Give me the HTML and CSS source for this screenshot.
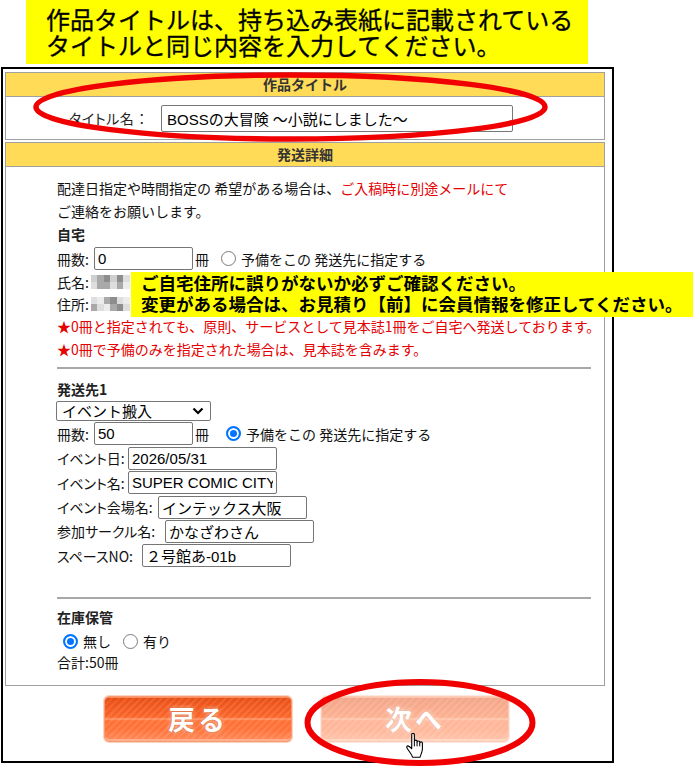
FILE: index.html
```html
<!DOCTYPE html>
<html lang="ja">
<head>
<meta charset="utf-8">
<title>作品情報入力</title>
<link rel="stylesheet" href="styles.css">
</head>
<body>
<div class="page">
  <div class="banner">作品タイトルは、持ち込み表紙に記載されている<br>タイトルと同じ内容を入力してください。</div>

  <div class="frame">
    <div class="section">
      <div class="sec-head">作品タイトル</div>
      <div class="title-body">
        <span class="title-label">タイトル名 ：</span>
        <input class="input input-title" type="text" value="BOSSの大冒険 〜小説にしました〜">
      </div>
    </div>

    <div class="section section-ship">
      <div class="sec-head">発送詳細</div>
      <div class="ship-body">
        <p class="line">配達日指定や時間指定の 希望がある場合は、<span class="red">ご入稿時に別途メールにて</span></p>
        <p class="line">ご連絡をお願いします。</p>
        <p class="line bold">自宅</p>
        <div class="field field-home">
          <span class="lbl lbl-count">冊数:</span>
          <input class="input input-count" type="text" value="0">
          <span class="unit">冊</span>
          <input class="radio radio-spare" type="radio" name="spare">
          <span class="radio-label">予備をこの 発送先に指定する</span>
        </div>
        <p class="line line-person"><span class="lbl">氏名:</span><span class="mosaic"><i class="c1"></i><i class="c2"></i><i class="c3"></i><i class="c1"></i><i class="c3"></i><i class="c4"></i><i class="c4"></i><i class="c2"></i><i class="c2"></i><i class="c4"></i><i class="c2"></i><i class="c5"></i></span></p>
        <p class="line line-person"><span class="lbl">住所:</span><span class="mosaic"><i class="c4"></i><i class="c5"></i><i class="c2"></i><i class="c3"></i><i class="c4"></i><i class="c5"></i><i class="c2"></i><i class="c4"></i><i class="c5"></i><i class="c2"></i><i class="c3"></i><i class="c4"></i></span></p>
        <p class="line red">★0冊と指定されても、原則、サービスとして見本誌1冊をご自宅へ発送しております。</p>
        <p class="line red">★0冊で予備のみを指定された場合は、見本誌を含みます。</p>

        <hr class="rule">

        <p class="line bold heading-dest">発送先1</p>
        <div class="select-wrap">
          <select class="select">
            <option>イベント搬入</option>
          </select>
          <svg class="chevron" width="12" height="8" viewBox="0 0 12 8"><path d="M1.5 1.5 L6 6 L10.5 1.5" fill="none" stroke="#000" stroke-width="2.2"/></svg>
        </div>
        <div class="field">
          <span class="lbl lbl-count">冊数:</span>
          <input class="input input-count" type="text" value="50">
          <span class="unit">冊</span>
          <input class="radio radio-spare2" type="radio" name="spare" checked>
          <span class="radio-label">予備をこの 発送先に指定する</span>
        </div>
        <div class="field">
          <span class="lbl lbl-date">イベント日:</span>
          <input class="input input-wide" type="text" value="2026/05/31">
        </div>
        <div class="field">
          <span class="lbl lbl-date">イベント名:</span>
          <input class="input input-wide" type="text" value="SUPER COMIC CITY">
        </div>
        <div class="field">
          <span class="lbl lbl-venue">イベント会場名:</span>
          <input class="input input-wide" type="text" value="インテックス大阪">
        </div>
        <div class="field">
          <span class="lbl lbl-circle">参加サークル名:</span>
          <input class="input input-wide" type="text" value="かなざわさん">
        </div>
        <div class="field">
          <span class="lbl lbl-space">スペースNO:</span>
          <input class="input input-wide" type="text" value="２号館あ-01b">
        </div>

        <hr class="rule rule-stock">

        <p class="line bold heading-stock">在庫保管</p>
        <div class="stock-row">
          <input class="radio" type="radio" name="stock" checked>
          <span class="radio-label">無し</span>
          <input class="radio radio-gap" type="radio" name="stock">
          <span class="radio-label">有り</span>
        </div>
        <p class="line total">合計:50冊</p>
      </div>
    </div>

    <div class="buttons">
      <button class="btn" type="button">戻る</button>
      <button class="btn btn-next" type="button">次へ</button>
    </div>
  </div>

  <div class="tooltip">ご自宅住所に誤りがないか必ずご確認ください。<br>変更がある場合は、お見積り【前】に会員情報を修正してください。</div>

  <svg class="marks" width="695" height="770" viewBox="0 0 695 770">
    <ellipse cx="290.5" cy="107" rx="254.5" ry="32" fill="none" stroke="#f00000" stroke-width="5.5"/>
    <ellipse cx="420" cy="722.5" rx="112.5" ry="40.5" fill="none" stroke="#f00000" stroke-width="6"/>
  </svg>

  <svg class="cursor" width="19" height="25" viewBox="0 0 17 22.5">
    <path d="M6 1.5 C6 0.7 6.6 0.3 7.2 0.3 C7.8 0.3 8.4 0.7 8.4 1.5 L8.4 7.5 C8.4 6.8 9 6.4 9.6 6.4 C10.2 6.4 10.8 6.8 10.8 7.5 L10.8 8.3 C10.8 7.6 11.4 7.2 12 7.2 C12.6 7.2 13.2 7.6 13.2 8.3 L13.2 9.1 C13.2 8.4 13.8 8 14.4 8 C15 8 15.6 8.4 15.6 9.1 L15.6 14.5 C15.6 17.5 14 19.5 13.5 21.8 L6.8 21.8 C6 19 4 17 2 14 C1.2 12.8 1.6 11.6 2.6 11.6 C3.4 11.6 4.4 12.4 6 14 Z" fill="#fff" stroke="#000" stroke-width="1" stroke-linejoin="round"/>
    <path d="M8.4 7.5 V12 M10.8 8.3 V12 M13.2 9.1 V12" stroke="#000" stroke-width="0.9"/>
  </svg>
</div>
</body>
</html>
```

FILE: styles.css
```css
html, body {
  margin: 0;
  padding: 0;
  background: #fff;
}

body {
  font-family: "Noto Sans CJK JP", "Noto Sans", sans-serif;
  color: #111;
}

.page {
  position: relative;
  width: 695px;
  height: 770px;
  overflow: hidden;
}

/* ---------- top banner ---------- */
.banner {
  margin-left: 26px;
  width: 562px;
  height: 64px;
  box-sizing: border-box;
  padding: 6px 0 0 20px;
  background: #ffff00;
  font-size: 24px;
  line-height: 26px;
  color: #000;
  white-space: nowrap;
  -webkit-text-stroke: 0.3px #000;
}

/* ---------- outer frame ---------- */
.frame {
  margin: 3px 0 0 1px;
  width: 613px;
  height: 696px;
  box-sizing: border-box;
  border: 2px solid #000;
  padding: 3px 7px 0 2px;
}

.section {
  border: 1px solid #a0a0a0;
  background: #fff;
}

.section-ship {
  margin-top: 2px;
}

.sec-head {
  height: 23px;
  border-bottom: 1px solid #a0a0a0;
  background: #ffdb58;
  text-align: center;
  font-size: 14px;
  font-weight: bold;
  line-height: 23px;
  color: #333;
}

/* ---------- title ---------- */
.title-body {
  height: 42px;
  display: flex;
  align-items: center;
  padding-left: 63px;
}

.title-label {
  width: 92px;
  font-size: 14px;
  color: #222;
  font-feature-settings: "palt";
  letter-spacing: 0.6px;
}

.input {
  box-sizing: border-box;
  margin: 0;
  border: 1px solid #767676;
  border-radius: 2px;
  background: #fff;
  padding: 0 3px;
  font-family: "Liberation Sans", "Noto Sans CJK JP", sans-serif;
  font-size: 15px;
  color: #000;
  outline: none;
}

.input-title {
  width: 352px;
  height: 27px;
  padding-left: 5px;
}

/* ---------- shipping ---------- */
.ship-body {
  padding: 10px 13px 12px 51px;
  font-size: 14px;
  color: #111;
}

.line {
  margin: 0;
  line-height: 23px;
  white-space: nowrap;
}

.bold {
  font-weight: bold;
  color: #222;
}

.red {
  color: #e60000;
}

.line-person {
  line-height: 22px;
  display: flex;
  align-items: center;
}

.field {
  display: flex;
  align-items: center;
  height: 23px;
  margin-top: 1.4px;
  white-space: nowrap;
}

.field-home {
  margin-top: 1px;
  margin-bottom: 1px;
}

.lbl {
  flex: none;
  font-feature-settings: "palt";
}

.lbl-count { width: 37px; }
.lbl-date { width: 71px; }
.lbl-venue { width: 101px; }
.lbl-circle { width: 108px; }
.lbl-space { width: 85px; }

.input-count {
  width: 99px;
  height: 23px;
}

.input-wide {
  width: 149px;
  height: 23px;
}

.unit {
  margin-left: 2px;
}

.radio {
  appearance: none;
  -webkit-appearance: none;
  flex: none;
  box-sizing: border-box;
  width: 15px;
  height: 15px;
  margin: 0;
  border: 1px solid #7a7a7a;
  border-radius: 50%;
  background: #fff;
}

.radio:checked {
  border: 2px solid #0075ff;
  background: #0075ff;
  box-shadow: inset 0 0 0 2px #fff;
}

.radio-spare {
  margin-left: 12px;
  margin-right: 5px;
}

.radio-spare2 {
  margin-left: 17px;
  margin-right: 5px;
}

.radio-label {
  white-space: nowrap;
}

.mosaic {
  display: inline-grid;
  grid-template-columns: repeat(6, 6.5px);
  grid-template-rows: repeat(2, 7px);
  margin-left: 2px;
}

.mosaic i { display: block; }
.mosaic .c1 { background: #cfcfcf; }
.mosaic .c2 { background: #a9a9a9; }
.mosaic .c3 { background: #8d8d8d; }
.mosaic .c4 { background: #dedede; }
.mosaic .c5 { background: #ececec; }

.rule {
  margin: 6px 0 0;
  height: 0;
  border: 0;
  border-top: 2px solid #a8a8a8;
}

.heading-dest {
  margin-top: 9px;
  line-height: 22px;
}

.select-wrap {
  display: flex;
  align-items: center;
  box-sizing: border-box;
  width: 155px;
  height: 20px;
  margin: 1px 0 0 -1px;
  border: 1px solid #767676;
  border-radius: 2px;
  background: #fff;
}

.select {
  appearance: none;
  -webkit-appearance: none;
  flex: 1;
  min-width: 0;
  height: 18px;
  border: 0;
  margin: 0;
  padding: 0 0 0 5px;
  background: transparent;
  font-family: "Noto Sans CJK JP", sans-serif;
  font-size: 15px;
  line-height: 18px;
  color: #000;
  outline: none;
}

.chevron {
  margin-right: 6px;
  flex: none;
}

.rule-stock {
  margin-top: 30px;
}

.heading-stock {
  margin-top: 7px;
  line-height: 22px;
}

.stock-row {
  display: flex;
  align-items: center;
  height: 20px;
  margin-top: 3px;
  padding-left: 6px;
}

.stock-row .radio-label {
  margin-left: 5px;
}

.radio-gap {
  margin-left: 12px;
}

.total {
  line-height: 22px;
}

/* ---------- buttons ---------- */
.buttons {
  display: flex;
  gap: 29px;
  margin-top: 10px;
  padding-left: 99px;
}

.btn {
  width: 188px;
  height: 46px;
  box-sizing: border-box;
  margin: 0;
  padding: 0;
  border: 1px solid #f59a72;
  border-radius: 5px;
  box-shadow: 0 0 0 1px #fcd3c0, inset 0 -2px 0 #ffb08a, inset 0 1px 0 #ff8a5a;
  background:
    repeating-linear-gradient(135deg, rgba(255, 255, 255, 0.1) 0 2px, rgba(255, 255, 255, 0) 2px 5px),
    linear-gradient(to bottom, #e24c14 0%, #ec5419 10%, #f55d22 30%, #fb6629 46%, #ff9a6a 50%, #ff7035 54%, #ff733a 75%, #ff8c5c 100%);
  color: #fff;
  font-family: "Noto Sans CJK JP", sans-serif;
  font-size: 27px;
  font-weight: bold;
  letter-spacing: 3px;
  line-height: 44px;
  text-shadow: 0 0 1px #c8461a, 0 0 2px #d9541f, 0 0 4px rgba(255, 225, 205, 0.95);
}

.btn-next {
  opacity: 0.5;
}

/* ---------- overlays ---------- */
.tooltip {
  position: absolute;
  left: 131px;
  top: 272px;
  width: 562px;
  height: 45px;
  box-sizing: border-box;
  padding: 0 0 0 10px;
  background: #ffff00;
  font-size: 17.5px;
  font-weight: bold;
  line-height: 21px;
  color: #000;
  white-space: nowrap;
}

.marks {
  position: absolute;
  left: 0;
  top: 0;
  pointer-events: none;
}

.cursor {
  position: absolute;
  left: 405px;
  top: 733px;
}
```
